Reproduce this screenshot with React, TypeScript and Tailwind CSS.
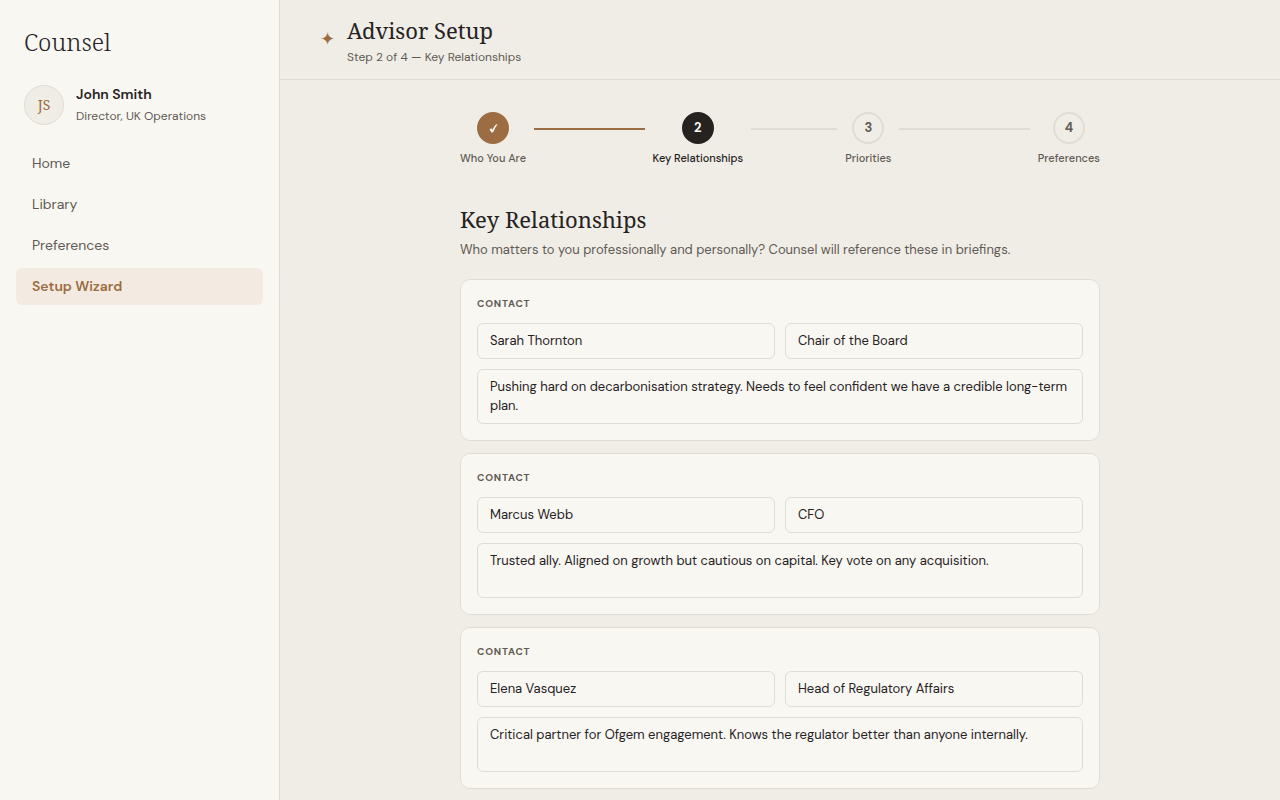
import clsx from "clsx";

const navItems = ["Home", "Library", "Preferences", "Setup Wizard"];
const activeNav = "Setup Wizard";

const steps = ["Who You Are", "Key Relationships", "Priorities", "Preferences"];
const currentStep = 1;

interface Contact {
  name: string;
  role: string;
  notes: string;
}

const contacts: Contact[] = [
  {
    name: "Sarah Thornton",
    role: "Chair of the Board",
    notes:
      "Pushing hard on decarbonisation strategy. Needs to feel confident we have a credible long-term plan.",
  },
  {
    name: "Marcus Webb",
    role: "CFO",
    notes:
      "Trusted ally. Aligned on growth but cautious on capital. Key vote on any acquisition.",
  },
  {
    name: "Elena Vasquez",
    role: "Head of Regulatory Affairs",
    notes:
      "Critical partner for Ofgem engagement. Knows the regulator better than anyone internally.",
  },
];

const serif = "font-['Noto_Serif','Droid_Serif','Liberation_Serif',serif]";
const field =
  "block w-full rounded-md border border-[#dfdcd5] bg-[#f9f7f2] px-3 text-[13px] text-[#26221f] outline-none focus:border-[#9c6d42]";

function Sidebar() {
  return (
    <aside className="w-[280px] shrink-0 border-r border-[#dfdcd5] bg-[#f9f7f2]">
      <div className={clsx(serif, "px-6 pt-6 text-2xl leading-9 font-light")}>
        Counsel
      </div>

      <div className="flex items-center gap-3 px-6 pt-[23px] pb-[18px]">
        <div
          className={clsx(
            serif,
            "flex size-10 shrink-0 items-center justify-center rounded-full border border-[#dfdcd5] bg-[#f0ede6] text-sm text-[#9c6d42]",
          )}
        >
          JS
        </div>
        <div>
          <div className="text-sm leading-[22px] font-semibold">John Smith</div>
          <div className="text-xs leading-[22px] text-[#5f5a54]">
            Director, UK Operations
          </div>
        </div>
      </div>

      <nav className="flex flex-col gap-1 px-4">
        {navItems.map((item) => (
          <a
            key={item}
            href="#"
            className={clsx(
              "rounded-md px-4 py-2 text-sm leading-[21px]",
              item === activeNav
                ? "bg-[#f3ebe1] font-semibold text-[#9c6d42]"
                : "text-[#5f5a54]",
            )}
          >
            {item}
          </a>
        ))}
      </nav>
    </aside>
  );
}

function Header() {
  return (
    <header className="flex items-start gap-3 border-b border-[#dfdcd5] px-10 pt-[14px] pb-3">
      <span className="mt-[13px] w-[15px] font-['DejaVu_Sans',sans-serif] text-lg leading-6 text-[#9c6d42]">
        ✦
      </span>
      <div>
        <h1 className={clsx(serif, "text-[22px] leading-8")}>Advisor Setup</h1>
        <p className="mt-px text-xs leading-5 text-[#5f5a54]">
          Step 2 of 4 — Key Relationships
        </p>
      </div>
    </header>
  );
}

function CheckMark() {
  return (
    <svg viewBox="0 0 10 10" className="size-[9px]" fill="currentColor">
      <path d="M0.6 6L2.5 4.6L3.8 6.4C4.9 4.1 6.2 2 7.8 0.5L9.6 0.4C7.6 3 5.9 5.9 4.6 9.2L2.6 9.5C2.1 8.1 1.5 6.9 0.6 6Z" />
    </svg>
  );
}

function Stepper() {
  return (
    <ol className="flex">
      {steps.map((label, i) => {
        const done = i < currentStep;
        const current = i === currentStep;
        const last = i === steps.length - 1;

        return (
          <li
            key={label}
            className={clsx("flex items-start", !last && "flex-1 basis-0")}
          >
            <div className="flex flex-col items-center gap-1.5">
              <div
                className={clsx(
                  "flex size-8 items-center justify-center rounded-full border-2 text-[13px] font-bold",
                  done && "border-[#9c6d42] bg-[#9c6d42] text-[#f9f7f2]",
                  current && "border-[#26221f] bg-[#26221f] text-[#f9f7f2]",
                  !done && !current && "border-[#dfdcd5] text-[#5f5a54]",
                )}
              >
                {done ? <CheckMark /> : i + 1}
              </div>
              <span
                className={clsx(
                  "text-[11px] leading-4 font-medium whitespace-nowrap",
                  current ? "text-[#26221f]" : "text-[#5f5a54]",
                )}
              >
                {label}
              </span>
            </div>
            {!last && (
              <div
                className={clsx(
                  "mx-2 mt-4 h-0.5 flex-1",
                  done ? "bg-[#9c6d42]" : "bg-[#dfdcd5]",
                )}
              />
            )}
          </li>
        );
      })}
    </ol>
  );
}

function ContactCard({ contact }: { contact: Contact }) {
  return (
    <fieldset
      aria-label="Contact"
      className="rounded-[10px] border border-[#dfdcd5] bg-[#f9f7f2] p-4"
    >
      <div className="mb-3 text-[10px] leading-[15px] font-bold tracking-[0.8px] text-[#5f5a54] uppercase">
        Contact
      </div>
      <div className="mb-2.5 grid grid-cols-2 gap-2.5">
        <input
          aria-label="Name"
          defaultValue={contact.name}
          className={clsx(field, "h-9 pb-0.5")}
        />
        <input
          aria-label="Role"
          defaultValue={contact.role}
          className={clsx(field, "h-9 pb-0.5")}
        />
      </div>
      <textarea
        aria-label="Notes"
        defaultValue={contact.notes}
        className={clsx(field, "h-[55px] resize-none py-[7px] leading-[19px]")}
      />
    </fieldset>
  );
}

export default function App() {
  return (
    <div className="flex h-screen bg-[#f0ede6] font-['DM_Sans',Inter,sans-serif] text-[#26221f]">
      <Sidebar />
      <div className="flex min-w-0 flex-1 flex-col">
        <Header />
        <main className="flex-1 overflow-y-auto px-10 py-8 [scrollbar-width:none]">
          <div className="mx-auto max-w-[640px]">
            <Stepper />
            <h2 className={clsx(serif, "mt-9 text-[22px] leading-[34px]")}>
              Key Relationships
            </h2>
            <p className="mt-1 mb-5 text-[13px] leading-[19px] text-[#5f5a54]">
              Who matters to you professionally and personally? Counsel will
              reference these in briefings.
            </p>
            <div className="flex flex-col gap-3">
              {contacts.map((contact) => (
                <ContactCard key={contact.name} contact={contact} />
              ))}
            </div>
          </div>
        </main>
      </div>
    </div>
  );
}
